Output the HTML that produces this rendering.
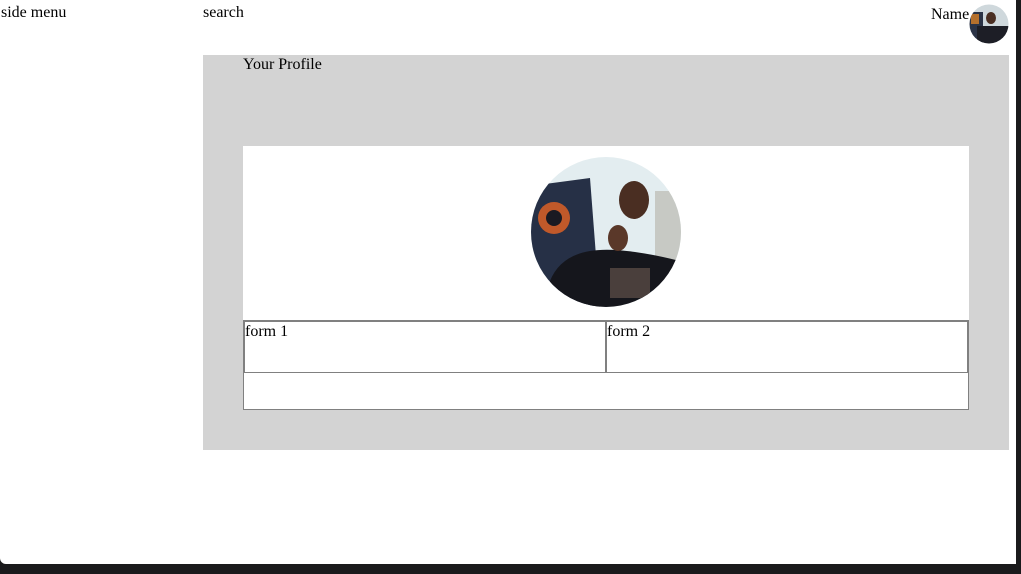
<!DOCTYPE html>
<html><head><style>
body{margin:0;width:1021px;height:574px;background:#1a1a1c;position:relative;overflow:hidden;font-family:"Liberation Serif",serif;font-size:16px;color:#000}
.page{position:absolute;left:0;top:0;width:1016px;height:564px;background:#fff;border-bottom-left-radius:6px}
.t{position:absolute;line-height:18px}
.gray{position:absolute;left:203px;top:55px;width:806px;height:395px;background:#d3d3d3}
.card{position:absolute;left:243px;top:146px;width:726px;height:264px;background:#fff}
.lower{position:absolute;left:243px;top:320px;width:724px;height:88px;border:1px solid #808080}
.cell{position:absolute;top:0;height:52px;border:1px solid #808080;box-sizing:border-box}
</style></head><body>
<div class="page">
<div class="t" style="left:1px;top:4px">side menu</div>
<div class="t" style="left:203px;top:4px">search</div>
<div class="t" style="left:931px;top:6px">Name</div>
<svg style="position:absolute;left:969px;top:4px" width="40" height="40"><defs><clipPath id="c1"><circle cx="20" cy="20" r="19.5"/></clipPath></defs><g clip-path="url(#c1)"><rect width="40" height="40" fill="#cfd8dc"/><rect x="0" y="8" width="14" height="32" fill="#2b3346"/><rect x="2" y="10" width="8" height="10" fill="#b5702c"/><ellipse cx="22" cy="14" rx="5" ry="6" fill="#4a2e22"/><rect x="8" y="22" width="32" height="18" fill="#1d1e26"/></g></svg>
<div class="gray">
<div class="t" style="left:40px;top:1px">Your Profile</div>
</div>
<div class="card">
<svg style="position:absolute;left:287px;top:10px" width="152" height="152"><defs><clipPath id="c2"><circle cx="76" cy="76" r="75"/></clipPath></defs><g clip-path="url(#c2)"><rect width="152" height="152" fill="#e3edf0"/><path d="M0 30 L60 22 L70 152 L0 152Z" fill="#263046"/><circle cx="24" cy="62" r="16" fill="#c0592a"/><circle cx="24" cy="62" r="8" fill="#1a1a22"/><rect x="125" y="35" width="27" height="75" fill="#c7c9c4"/><ellipse cx="104" cy="44" rx="15" ry="19" fill="#4a2e22"/><path d="M20 125 Q30 100 60 95 Q90 90 150 105 L150 152 L20 152Z" fill="#15161c"/><ellipse cx="88" cy="82" rx="10" ry="13" fill="#5a3829"/><rect x="80" y="112" width="40" height="30" fill="#4a3f3c"/></g></svg>
</div>
<div class="lower">
<div class="cell" style="left:0;width:362px"><div class="t" style="left:0;top:1px">form 1</div></div>
<div class="cell" style="left:362px;width:362px"><div class="t" style="left:0;top:1px">form 2</div></div>
</div>
</div>
</body></html>
